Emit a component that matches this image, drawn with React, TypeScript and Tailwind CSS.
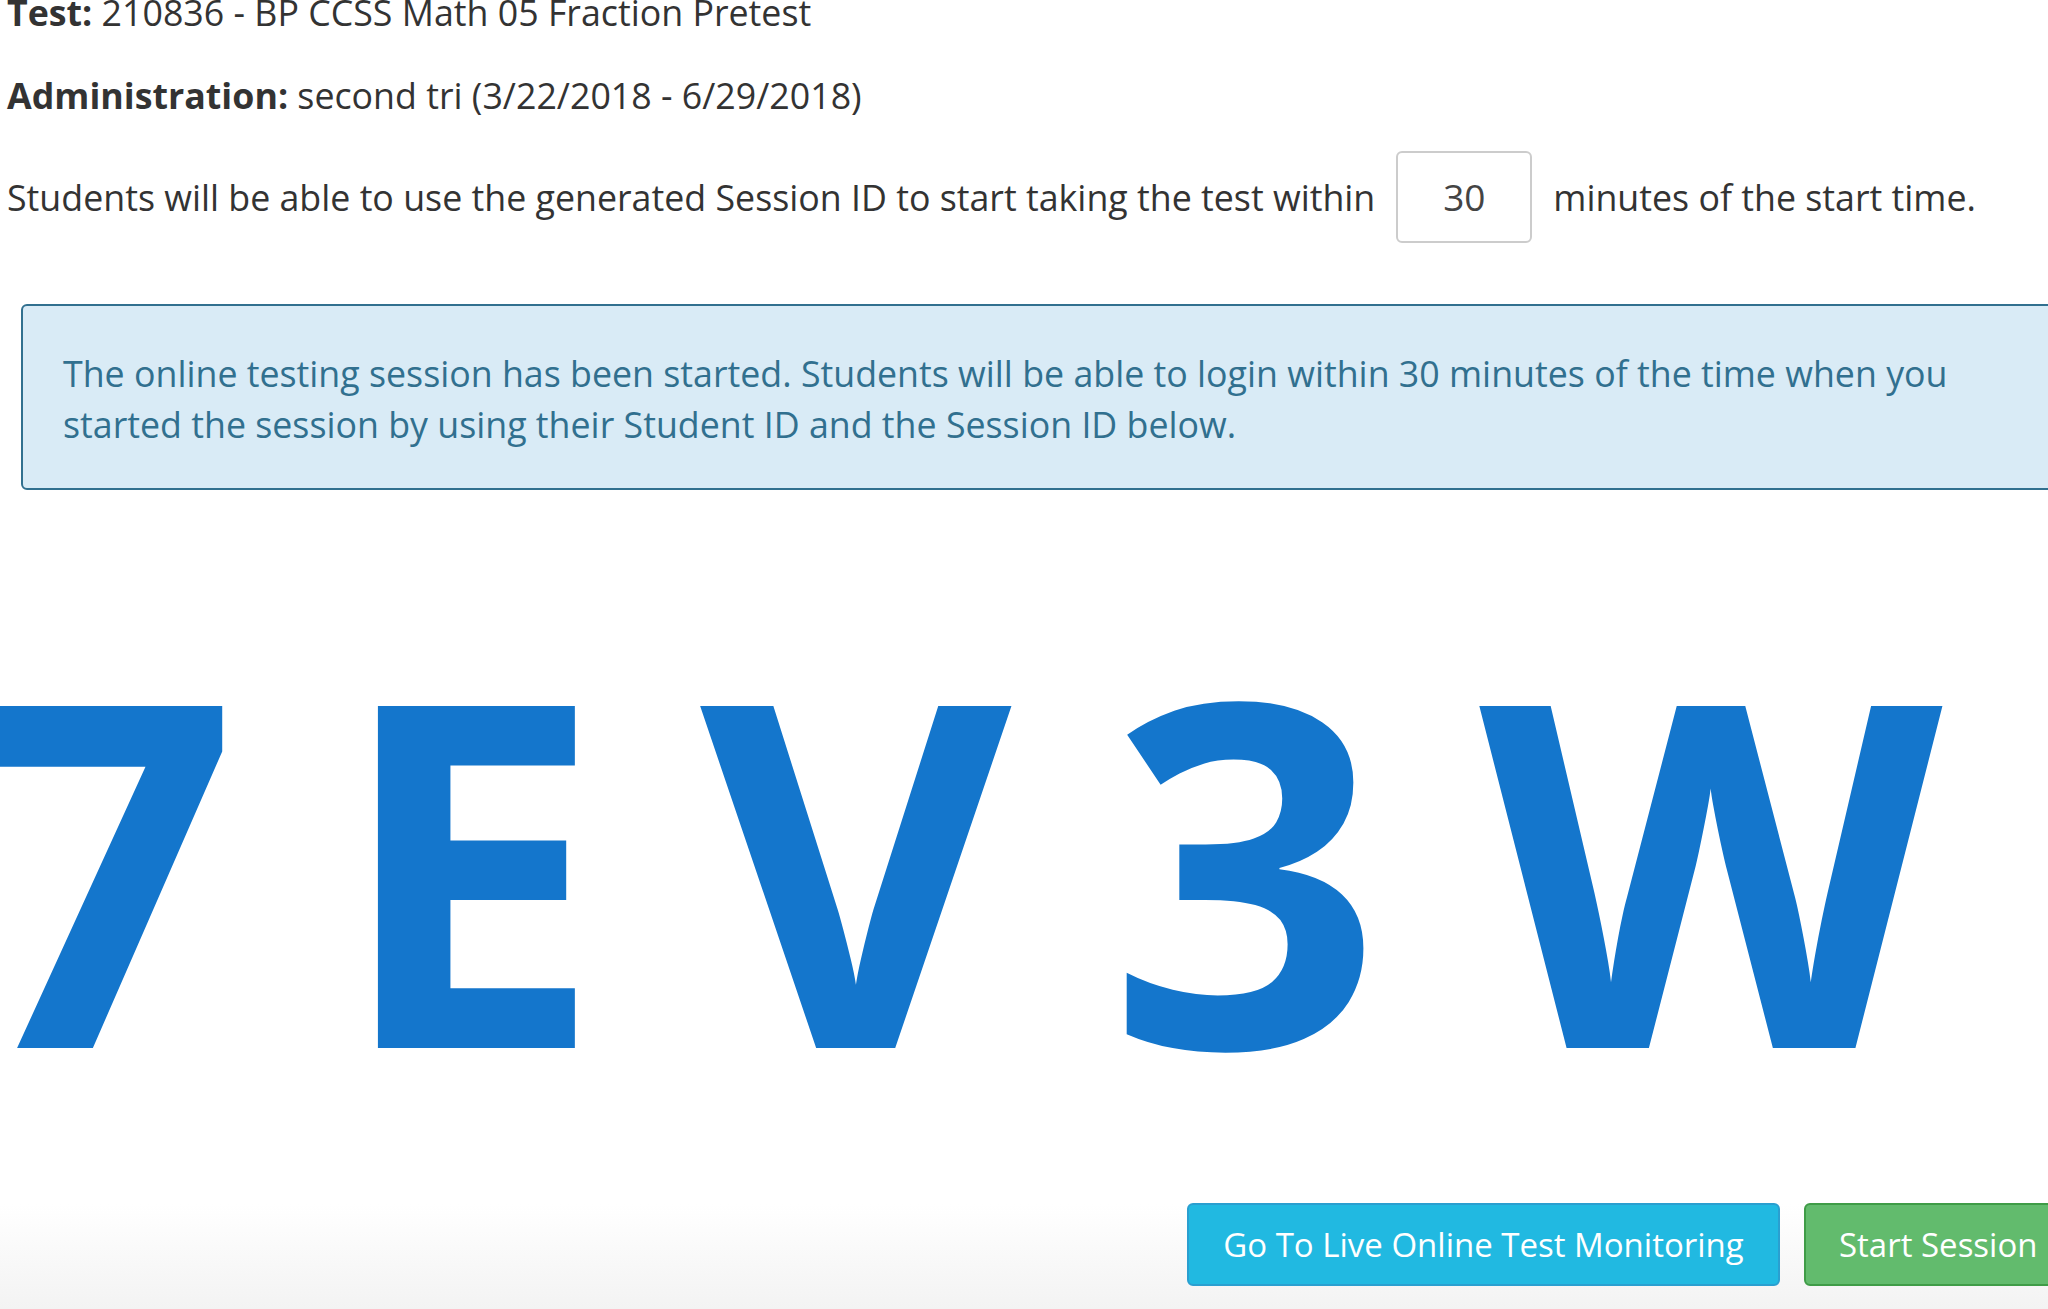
import React from "react";

export default function App() {
  return (
    <div
      className="w-[2048px] h-[1309px] overflow-hidden bg-gradient-to-b from-white from-[92%] to-[#f3f3f3] text-[#333] flex flex-col"
      style={{ fontFamily: '"Open Sans", "Liberation Sans", sans-serif' }}
    >
      <div className="pl-[7px] text-[35.75px] leading-[42px] -mt-[9px] whitespace-nowrap">
        <b className="font-bold">Test:</b> 210836 - BP CCSS Math 05 Fraction Pretest
      </div>
      <div className="pl-[7px] text-[35.75px] leading-[42px] mt-[41px] whitespace-nowrap">
        <b className="font-bold">Administration:</b> second tri (3/22/2018 - 6/29/2018)
      </div>
      <div className="pl-[7px] text-[35.75px] leading-[42px] mt-[35px] flex items-center whitespace-nowrap">
        <span>Students will be able to use the generated Session ID to start taking the test within</span>
        <div className="ml-[21px] mr-[21px] shrink-0 w-[136px] h-[92px] border-2 border-[#ccc] rounded-[6px] flex items-center justify-center text-[37px] text-[#444]">
          30
        </div>
        <span>minutes of the start time.</span>
      </div>
      <div className="ml-[21px] mt-[61px] w-[2200px] h-[186px] shrink-0 bg-[#d9ebf6] border-2 border-[#31708f] rounded-[6px] pl-[40px] pt-[42px] text-[35.75px] leading-[51px] text-[#31708f] whitespace-nowrap">
        The online testing session has been started. Students will be able to login within 30 minutes of the time when you
        <br />
        started the session by using their Student ID and the Session ID below.
      </div>
      <div className="mt-[162px] -ml-[36px] whitespace-nowrap text-[479px] font-bold leading-[420px] tracking-[97px] text-[#1476cc]">
        7EV3W
      </div>
      <div className="mt-[131px] ml-[1187px] flex gap-[24px] whitespace-nowrap">
        <button className="shrink-0 w-[593px] h-[83px] bg-[#21b9e1] border-2 border-[#2a9fd0] rounded-[6px] text-white text-[33px]">
          Go To Live Online Test Monitoring
        </button>
        <button className="shrink-0 h-[83px] pl-[33px] pr-[60px] bg-[#62bb6d] border-2 border-[#3f9c47] rounded-[6px] text-white text-[33px] text-left">
          Start Session
        </button>
      </div>
    </div>
  );
}
